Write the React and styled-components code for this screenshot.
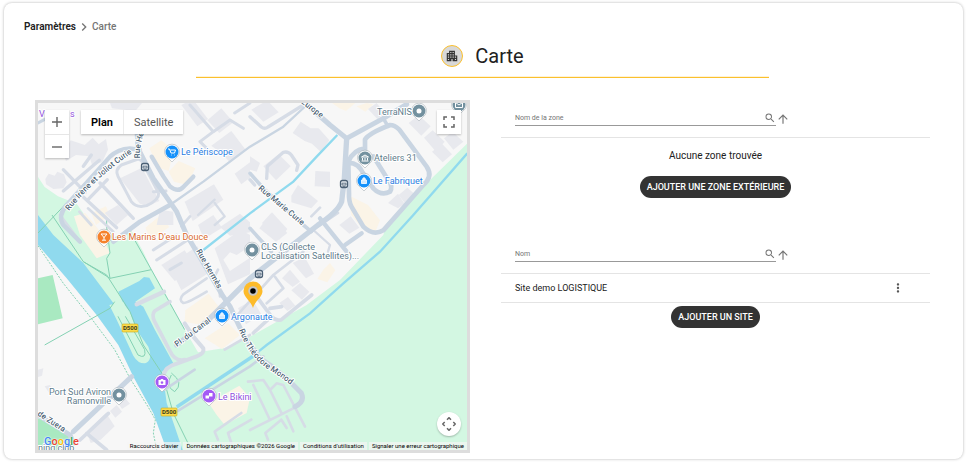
import React from 'react';
import styled, { createGlobalStyle } from 'styled-components';
import {
  MdApartment, MdArrowUpward, MdChevronRight, MdMoreVert, MdSearch,
} from 'react-icons/md';

const GlobalStyle = createGlobalStyle`
  * {
    box-sizing: border-box;
  }
  body {
    margin: 0;
    background: #fff;
    color: #212121;
    font-family: Roboto, "Liberation Sans", sans-serif;
  }
  button, input {
    font-family: inherit;
  }
`;

const Card = styled.main`
  margin: 3px 3px 3px 4px;
  padding: 0 33px 6px 31px;
  border-radius: 8px;
  box-shadow: 0 0 3px rgba(0, 0, 0, .3);
`;

const Breadcrumb = styled.nav`
  display: flex;
  align-items: center;
  margin-left: -11px;
  padding-top: 16px;
  font-size: 10px;
  font-weight: 500;
  line-height: 14px;
  color: #757575;
`;

const Crumb = styled.a`
  color: #212121;
  font-weight: 600;
  text-decoration: none;
`;

const Header = styled.header`
  display: flex;
  align-items: center;
  justify-content: center;
  gap: 12px;
  width: 64%;
  height: 43px;
  margin: 0 auto 22px;
  border-bottom: 1px solid #fbc02d;
  box-shadow: inset 0 -1px #fff3d6;
`;

const Badge = styled.span`
  display: flex;
  align-items: center;
  justify-content: center;
  width: 22px;
  height: 22px;
  border: 1px solid #fbc02d;
  border-radius: 50%;
  background: #d8d8d8;
  color: #333;
`;

const Title = styled.h1`
  margin: 0;
  font-size: 20px;
  font-weight: 400;
`;

const Columns = styled.div`
  display: grid;
  grid-template-columns: 435fr 429fr;
  gap: 31px;
`;

const MapFrame = styled.section`
  position: relative;
  height: 353px;
  border: 3px solid #ddd;
  overflow: hidden;
  background: #f7f7f7;
`;

const MapCanvas = styled.svg`
  display: block;
  width: 100%;
  height: 100%;
`;

const Label = styled.text`
  font-size: ${(props) => (props.$small ? '8px' : '9px')};
  font-weight: ${(props) => (props.$small ? 500 : 400)};
  fill: ${(props) => props.$color || '#5f7d8c'};
  stroke: #fff;
  stroke-width: 2px;
  stroke-linejoin: round;
  paint-order: stroke;
`;

const RoadSign = styled.text`
  font-size: 6px;
  font-weight: 700;
  fill: #3c3a1c;
`;

const Control = styled.div`
  position: absolute;
  display: flex;
  background: #fff;
  box-shadow: 0 1px 2px rgba(0, 0, 0, .25);
`;

const ZoomControl = styled(Control)`
  top: 7px;
  left: 7px;
  flex-direction: column;
`;

const TypeControl = styled(Control)`
  top: 7px;
  left: 43px;
`;

const FullscreenControl = styled(Control)`
  top: 7px;
  right: 6px;
`;

const PanControl = styled(Control)`
  right: 6px;
  bottom: 14px;
  border-radius: 50%;
`;

const IconButton = styled.button`
  display: flex;
  align-items: center;
  justify-content: center;
  width: 24px;
  height: 24px;
  padding: 0;
  border: 0;
  background: none;
  color: #666;

  & + & {
    border-top: 1px solid #e6e6e6;
  }
`;

const TypeButton = styled.button`
  height: 24px;
  padding: 0 10px;
  border: 0;
  background: none;
  font-size: 11px;
  font-weight: ${(props) => (props.$active ? 600 : 400)};
  color: ${(props) => (props.$active ? '#000' : '#565656')};

  & + & {
    border-left: 1px solid #ececec;
  }
`;

const Google = styled.a`
  position: absolute;
  left: 6px;
  bottom: 1px;
  font-size: 11px;
  font-weight: 500;
  line-height: 14px;
  text-decoration: none;
  text-shadow: 0 0 1px #fff, 0 0 2px #fff;
`;

const Letter = styled.span`
  color: ${(props) => props.$color};
`;

const Attribution = styled.div`
  position: absolute;
  right: 0;
  bottom: 0;
  display: flex;
  gap: 2px;
`;

const Legal = styled.a`
  padding: 0 3px;
  background: rgba(245, 245, 245, .7);
  font-size: 6px;
  line-height: 8px;
  color: #000;
  text-decoration: none;
  white-space: nowrap;
`;

const Panel = styled.section`
  display: flex;
  flex-direction: column;
  align-items: center;

  & + & {
    margin-top: 38px;
  }
`;

const SearchBar = styled.div`
  display: flex;
  align-items: flex-end;
  width: 100%;
  height: 38px;
  padding: 0 14px 11px;
  border-bottom: 1px solid #e4e4e4;
`;

const Field = styled.label`
  display: flex;
  align-items: center;
  width: 65%;
  height: 16px;
  border-bottom: 1px solid #999;
  color: #757575;
`;

const Input = styled.input`
  flex: 1;
  min-width: 0;
  padding: 0;
  border: 0;
  outline: 0;
  background: none;
  font-size: 7px;
  color: #333;

  &::placeholder {
    color: #757575;
    opacity: 1;
  }
`;

const SortButton = styled.button`
  display: flex;
  padding: 0;
  border: 0;
  background: none;
  color: #757575;
`;

const Empty = styled.p`
  margin: 11px 0 13px;
  font-size: 10px;
  line-height: 14px;
`;

const AddButton = styled.button`
  height: 22px;
  padding: 0 7px;
  border: 0;
  border-radius: 11px;
  background: #333;
  color: #fff;
  font-size: 9px;
  font-weight: 500;
  text-transform: uppercase;
`;

const SiteTable = styled.table`
  width: 100%;
  margin-bottom: 3px;
  border-collapse: collapse;
`;

const Cell = styled.td`
  height: 28px;
  padding: 0 14px;
  border-bottom: 1px solid #e4e4e4;
  font-size: 9px;
`;

const ActionCell = styled(Cell)`
  width: 62px;
  padding: 0 25px;
`;

const RowButton = styled(SortButton)`
  color: #555;
`;

// Terrain and road shapes are drawn on a grid three times finer than the labels.
const BUILDINGS = [
  'M98 112l42 14 24-22 18 20 22-16 6 32-18 38-30 8-8-26-40-4-30 18-8-24z',
  'M22 228l10-16 18 6 8-12 20 8 8 24-10 18-30 2-22-14z',
  'M246 226l66-32 52 100-36 16-22-8z',
  'M200 330l40-24 30 30-34 30z', 'M366 320l40 6 0 40-50 0z',
  'M440 296l88-52 28 46-92 64z', 'M546 372l60-40 30 26 0 30-60 10z',
  'M216 0l96 0-20 24-70-8z', 'M430 6l34-18 46 60-32 22z',
  'M508 52l42-36 36 42-42 32z', 'M520 128l60-44 44 58-50 34-20-22z',
  'M590 212l46-34 0 46-26 20z', 'M640 20l48-28 34 36-46 28z',
  'M764 90l24-34 30 20 24 0 32 36-26 34-26-24-22-8z',
  'M832 204l44 2 0 46-46-2z', 'M760 278l20-32 60 48-20 22-60-18z',
  'M676 190l46-36 36 36-44 42z', 'M636 160l30 20-10 26-20-6z',
  'M672 360l30-32 46 50-24 32z', 'M664 376l34-44 50 58-34 26z',
  'M1112 60l30-24 36 34-28 28z', 'M1158 104l26-22 36 34-26 30z',
  'M1182 146l30-24 30 32-28 24z', 'M1218 106l26-20 32 30-30 24z',
  'M1050 300l30-28 20 30-20 14z', 'M1082 276l26-22 28 24-34 24z',
  'M904 366l34-26 26 34-30 18z', 'M370 486l70-44 36 58-66 34z',
  'M438 456l40-26 24 50-40 22z', 'M406 512l86-50 26 44-88 56z',
  'M530 436l78-56 28 16 0 34-40 26-20-8-20 22 20 34 60-40 0 50-66 30z',
  'M732 526l24-26 30 36-22 16z', 'M764 480l36-18 28 50-24 14z',
  'M760 562l26-22 28 26-22 24z', 'M724 600l26-18 22 26-24 16z',
  'M600 616l44-26 26 44-46 30z', 'M480 366l46-30 26 38-54 34z',
  'M146 986l58-56 26 40-42 40-30 10z', 'M216 924l20-18 16 20-20 18z',
  'M240 900l22-14 14 16-24 16z', 'M0 800l16-4-4 22-12 4z',
  'M20 850l16-4 10 20-10 8z', 'M990 18l26-18 24 30-22 18z',
];

const SAND = [
  'M334 136l36-24 38 30-16 62-30-10z', 'M392 206l30-32 50 22-24 50-40-10z',
  'M108 340l34-10 40 50 34 70-40 16-50-70z', 'M322 374l46-38 26 36-56 38z',
  'M442 622l70-50 38 50-60 44-50-10z', 'M500 706l70-46 36 36-54 42z',
  'M930 276l60 30 36 46-14 34-36-6-36-44z', 'M882 0l70 0-28 24-20-8z',
  'M956 10l30-10 20 4-24 22z', 'M856 500l20-20 16 22-24 36-30-10z',
  'M512 900l92-52 32 36-10 46-66 36-24-30z', 'M160 330l44-20 10 26-40 30z',
];

const ROADS = [
  ['M296 60L300 136L346 226L416 326L446 396L476 446L556 581L576 610L616 696L666 766L696 786L746 826L790 870Q802 896 771 911', 15],
  ['M306 141L276 136Q240 138 216 161L86 306Q58 340 76 366L126 416', 13],
  ['M226 416L306 356L396 306', 14],
  ['M396 306L496 236L636 131L736 71L806 6', 7],
  ['M341 161L376 220L396 250Q420 270 436 252L466 221', 13],
  ['M801 0L876 66L926 106L1036 46L1106 4', 15],
  ['M926 106L919 226L911 296Q900 326 840 366L636 526L556 606L506 656L416 726', 16],
  ['M636 211L676 256L796 366L820 386', 11],
  ['M846 346L926 446M921 426L971 391', 13],
  ['M981 150L981 110Q990 92 1056 66Q1070 66 1084 80L1166 191Q1186 220 1156 246L1036 382Q1006 400 976 371L940 310Q932 296 933 270L931 176Q946 140 981 136', 14],
  ['M926 180Q960 176 976 212L1006 256Q1030 280 1056 266Q1066 250 1050 230L1006 160', 14],
  ['M1036 46L1050 70M636 376L700 446', 11],
  ['M281 821L106 986M0 936L96 996L106 1020L86 1041', 15],
  ['M380 860L470 800M416 926L636 790L676 760', 8],
  ['M0 60L26 46', 9],
];

const LANES = [
  ['M76 200L142 268M184 172L76 264M136 282L236 374M186 240L286 346M150 290L208 230M160 156L136 190', 10],
  ['M250 186L300 168Q314 170 326 202L362 270Q364 290 326 308Q296 316 280 296L240 220Q230 200 250 186M346 266L384 264', 9],
  ['M456 6L526 86L576 51L616 76M486 116L526 86M486 116L506 136M590 30L636 0', 9],
  ['M636 41L670 72Q680 80 690 72L796 6', 10],
  ['M686 226L688 190L736 148Q750 144 760 156L780 186L776 202M636 230L650 246', 10],
  ['M346 441L416 396M356 471L466 400M396 500L430 480', 9],
  ['M506 526L436 574Q420 590 436 600Q446 602 506 566M540 500L530 520', 8],
  ['M296 604L378 566', 13],
  ['M396 596L350 624Q340 636 350 656L396 744Q410 776 440 770', 11],
  ['M440 661L466 701L496 736Q500 752 476 760L400 788Q376 800 378 820', 12],
  ['M826 381L876 426L870 446', 7],
  ['M586 650L706 516L796 446M711 521L736 556L686 601', 8],
  ['M660 586L700 640Q714 656 730 650L821 576M696 616L731 611M646 690L690 650', 11],
  ['M530 536L544 550L546 580M560 740L636 696', 8],
  ['M630 836L676 831L696 861L716 841L736 846L801 971M636 981L766 916M646 846L696 951M696 861L731 931', 8],
  ['M690 1010L682 990L730 950M730 950L746 975M746 940L766 985', 8],
  ['M540 1010L530 986L610 930M580 1020L570 990L640 950', 8],
  ['M126 1011L211 931M146 991L206 1041', 11],
  ['M66 336L126 416M124 326L160 366M150 316L226 386', 8],
  ['M430 370L456 340M900 330L840 370M820 340L846 314', 8],
  ['M480 336L530 290M530 300L560 340L530 366', 7],
];

const TRAILS = [
  'M42 336L136 476L206 516L276 626L316 726L372 811L406 931L460 1041',
  'M206 346L206 372L216 450L206 466L216 526L340 500L276 386M216 526L136 476',
  'M340 500L440 680M20 726L216 616L230 596M0 390L86 300M400 810Q440 840 410 866Q380 850 400 816',
  'M262 640L320 740Q326 770 300 756L240 640',
];

const LABELS = [
  { x: 143, y: 52, text: 'Le Périscope', color: '#2a7de1' },
  { x: 336, y: 58, text: 'Ateliers 31' },
  { x: 335, y: 81, text: 'Le Fabriquet', color: '#2a7de1' },
  { x: 339, y: 12, text: 'TerraNIS' },
  { x: 74, y: 137, text: 'Les Marins D\'eau Douce', color: '#d9692c' },
  { x: 223, y: 147, text: 'CLS (Collecte' },
  { x: 223, y: 156, text: 'Localisation Satellites)...' },
  { x: 193, y: 217, text: 'Argonaute', color: '#2a7de1' },
  { x: 180, y: 297, text: 'Le Bikini', color: '#9050dd' },
  { x: 73, y: 292, text: 'Port Sud Aviron', anchor: 'end' },
  { x: 73, y: 301, text: 'Ramonville', anchor: 'end' },
  { x: 1, y: 14, text: 'V', color: '#9050dd' },
  { x: 32, y: 14, text: 's', color: '#9050dd' },
  { x: 0, y: 348, text: 'ning club' },
];

const STREETS = [
  { id: 'irene', d: 'M31 108Q56 76 94 50', text: 'Rue Irène et Joliot Curie' },
  { id: 'hermes-north', d: 'M102 55Q101 42 108 24', text: 'Rue He' },
  { id: 'hermes', d: 'M158 148L190 204', text: 'Rue Hermès' },
  { id: 'curie', d: 'M220 86L280 136', text: 'Rue Marie Curie' },
  { id: 'europe', d: 'M263 0L302 30', text: 'Europe' },
  { id: 'canal', d: 'M139 244L190 206', text: 'Pl. du Canal' },
  { id: 'monod', d: 'M201 227Q212 256 233 268Q252 280 270 296', text: 'Rue Théodore Monod' },
  { id: 'zuera', d: 'M-1 312L36 336', text: 'de Zuera' },
];

const BLUE = '#1591fa';
const GREY = '#73919f';
const PURPLE = '#a45bf5';

const PINS = [
  { x: 134, y: 49, color: BLUE, glyph: 'cart' },
  { x: 327, y: 55, color: GREY, glyph: 'museum' },
  { x: 326, y: 78, color: BLUE, glyph: 'bag' },
  { x: 381, y: 8, color: GREY, glyph: 'dot' },
  { x: 421, y: 2, color: GREY, glyph: 'mail' },
  { x: 66, y: 134, color: '#f5822c', glyph: 'glass' },
  { x: 214, y: 147, color: GREY, glyph: 'dot' },
  { x: 184, y: 213, color: BLUE, glyph: 'bag' },
  { x: 171, y: 293, color: PURPLE, glyph: 'masks' },
  { x: 124, y: 279, color: PURPLE, glyph: 'camera' },
  { x: 81, y: 292, color: GREY, glyph: 'dot' },
];

const GLYPHS = {
  cart: <path d="M-4-3h1.5L-1 1h3.5l1-3h-5M-1 3h.6M2 3h.6" fill="none" stroke="#fff" />,
  museum: <path d="M-3.5-1L0-3l3.500 2zM-2.500 0v2.500M0 0v2.500M2.500 0v2.500M-3.500 3h7" fill="none" stroke="#fff" />,
  bag: <path d="M-2.500-1h5v3.500h-5zM-1.300-1v-1a1.300 1.300 0 0 1 2.600 0V-1" fill="#fff" stroke="#fff" fillOpacity=".8" strokeWidth=".8" />,
  dot: <circle r="2.500" fill="#fff" />,
  mail: <path d="M-3.500-2.500h7v5h-7zL0 0l3.500-2.500" fill="none" stroke="#fff" />,
  glass: <path d="M-3-3h6L0 .5zM0 0v3M-2 3.200h4" fill="none" stroke="#fff" />,
  masks: <path d="M-3.500-.5h3.500v3h-3.500zM0-3h3.500v3.500H0z" fill="#fff" />,
  camera: <path fillRule="evenodd" d="M-3.500-2h2l.5-1h2l.5 1h2v5h-7zM0-.8a1.300 1.300 0 1 0 .01 0z" fill="#fff" />,
};

const STOPS = [[107, 64], [306, 81], [221, 171]];
const SIGNS = [[92, 225], [131, 309]];

const GOOGLE = [
  ['G', '#4285f4'], ['o', '#ea4335'], ['o', '#fbbc05'],
  ['g', '#4285f4'], ['l', '#34a853'], ['e', '#ea4335'],
];

const Terrain = () => (
  <g transform="scale(.33333)">
    <path fill="#d3f7e2" d="M0 222L20 252L60 280L116 302L140 336L200 420L276 376L316 446L341 501L376 561L441 681L480 748L560 735L636 701L716 656L806 606L906 531L1036 396L1046 361L1186 221L1288 121V1041H420L340 760L0 350z" />
    <path fill="#a9e9c1" d="M0 526L44 516L74 646L0 664zM0 946L76 981L106 1020L96 1041H0z" />
    <path fill="#90daee" d="M0 336L46 396L136 480L226 600L286 720L300 700L276 626L256 602L241 566L304 534L318 522L334 524L351 556L292 596L316 611L351 681L406 781L372 806L382 870L386 900L434 1041H386L346 931L286 821L241 726L176 636L86 526L0 426z" />
    <path fill="#d3f7e2" d="M214 606L256 596L296 681L331 731Q346 772 321 781Q300 782 286 758L236 650z" />
    {SAND.map((d) => <path key={d} d={d} fill="#fbf4e7" />)}
    {BUILDINGS.map((d) => <path key={d} d={d} fill="#e8e9ee" />)}
    <g fill="none" stroke="#84d1b3" strokeWidth="3">
      {TRAILS.map((d) => <path key={d} d={d} />)}
      <path strokeDasharray="6 4" d="M0 428L76 541L160 646L230 740L276 826L330 911L352 950L346 990L356 1041" />
    </g>
    <g fill="none" stroke="#90daee" strokeWidth="7">
      <path d="M1288 151L1126 336L1026 446L916 541L816 631L686 726L636 766" />
      <path strokeWidth="10" d="M646 759L416 912" />
      <path d="M898 96L836 161L766 236L636 331L496 441" />
    </g>
    <g fill="none" strokeLinecap="round" strokeLinejoin="round">
      {LANES.map(([d, width]) => <path key={d} d={d} stroke="#d6dce6" strokeWidth={width} />)}
      {ROADS.map(([d, width]) => <path key={d} d={d} stroke="#c9d5e2" strokeWidth={width} />)}
    </g>
  </g>
);

const Pin = ({ x, y, color, glyph }) => (
  <g transform={`translate(${x} ${y})`}>
    <path d="M0 10L-4 6A7.500 7.500 0 1 1 4 6z" fill="#fff" stroke="#9aa5ab" strokeWidth=".5" />
    <circle r="6.500" fill={color} />
    {GLYPHS[glyph]}
  </g>
);

const SiteMap = () => (
  <MapFrame aria-label="Carte des sites">
    <MapCanvas viewBox="0 0 429 347" preserveAspectRatio="xMidYMid slice">
      <Terrain />
      {STREETS.map(({ id, d, text }) => (
        <React.Fragment key={id}>
          <path id={id} d={d} fill="none" />
          <Label $small $color="#4b5f73">
            <textPath href={`#${id}`}>{text}</textPath>
          </Label>
        </React.Fragment>
      ))}
      {STOPS.map(([x, y]) => (
        <g key={x} transform={`translate(${x} ${y})`}>
          <rect x="-3.500" y="-3.500" width="7" height="7" rx="2" fill="#e8edf2" stroke="#4b6075" strokeWidth="1.300" />
          <path d="M-2-.8h4v1.800h-4zM-1.500 2.400h3" fill="none" stroke="#4b6075" strokeWidth=".8" />
        </g>
      ))}
      {SIGNS.map(([x, y]) => (
        <g key={x} transform={`translate(${x} ${y})`}>
          <rect x="-8" y="-4" width="16" height="8" rx="1" fill="#fbdc4b" stroke="#c9a91c" strokeWidth=".6" />
          <RoadSign y="2" textAnchor="middle">D500</RoadSign>
        </g>
      ))}
      {PINS.map((pin) => <Pin key={`${pin.x}-${pin.y}`} {...pin} />)}
      {LABELS.map(({ x, y, text, color, anchor }) => (
        <Label key={text} x={x} y={y} $color={color} textAnchor={anchor}>{text}</Label>
      ))}
      <g transform="translate(215 188)">
        <path d="M0 17C-2 10-9.500 6-9.500 0a9.500 9.500 0 0 1 19 0C9.500 6 2 10 0 17z" fill="#fdbb2a" />
        <circle r="4.800" fill="#c5c5c5" />
        <circle r="2.800" fill="#000" />
      </g>
    </MapCanvas>
    <ZoomControl>
      <IconButton type="button" aria-label="Zoom avant">
        <svg width="12" height="12" viewBox="0 0 12 12"><path d="M6 1v10M1 6h10" stroke="currentColor" strokeWidth="1.400" /></svg>
      </IconButton>
      <IconButton type="button" aria-label="Zoom arrière">
        <svg width="12" height="12" viewBox="0 0 12 12"><path d="M1 6h10" stroke="currentColor" strokeWidth="1.400" /></svg>
      </IconButton>
    </ZoomControl>
    <TypeControl>
      <TypeButton type="button" $active>Plan</TypeButton>
      <TypeButton type="button">Satellite</TypeButton>
    </TypeControl>
    <FullscreenControl>
      <IconButton type="button" aria-label="Plein écran">
        <svg width="12" height="12" viewBox="0 0 12 12">
          <path d="M1 4V1h3M8 1h3v3M11 8v3H8M4 11H1V8" fill="none" stroke="currentColor" strokeWidth="1.500" />
        </svg>
      </IconButton>
    </FullscreenControl>
    <PanControl>
      <IconButton type="button" aria-label="Déplacer la carte">
        <svg width="14" height="14" viewBox="0 0 14 14">
          <path d="M5 2.700l2-2 2 2M5 11.300l2 2 2-2M2.700 5l-2 2 2 2M11.300 5l2 2-2 2" fill="none" stroke="currentColor" strokeWidth="1.500" />
        </svg>
      </IconButton>
    </PanControl>
    <Google href="#google" aria-label="Google">
      {/* eslint-disable-next-line react/no-array-index-key */}
      {GOOGLE.map(([letter, color], i) => <Letter key={i} $color={color}>{letter}</Letter>)}
    </Google>
    <Attribution>
      <Legal href="#raccourcis">Raccourcis clavier</Legal>
      <Legal href="#donnees">Données cartographiques ©2026 Google</Legal>
      <Legal href="#conditions">Conditions d&apos;utilisation</Legal>
      <Legal href="#erreur">Signaler une erreur cartographique</Legal>
    </Attribution>
  </MapFrame>
);

const Search = ({ label }) => (
  <SearchBar>
    <Field>
      <Input type="text" placeholder={label} aria-label={label} />
      <MdSearch size={12} />
    </Field>
    <SortButton type="button" aria-label="Trier">
      <MdArrowUpward size={14} />
    </SortButton>
  </SearchBar>
);

const App = () => (
  <>
    <GlobalStyle />
    <Card>
      <Breadcrumb aria-label="Fil d'Ariane">
        <Crumb href="#parametres">Paramètres</Crumb>
        <MdChevronRight size={16} />
        <span>Carte</span>
      </Breadcrumb>
      <Header>
        <Badge><MdApartment size={14} /></Badge>
        <Title>Carte</Title>
      </Header>
      <Columns>
        <SiteMap />
        <div>
          <Panel>
            <Search label="Nom de la zone" />
            <Empty>Aucune zone trouvée</Empty>
            <AddButton type="button">Ajouter une zone extérieure</AddButton>
          </Panel>
          <Panel>
            <Search label="Nom" />
            <SiteTable>
              <tbody>
                <tr>
                  <Cell>Site demo LOGISTIQUE</Cell>
                  <ActionCell>
                    <RowButton type="button" aria-label="Actions du site">
                      <MdMoreVert size={14} />
                    </RowButton>
                  </ActionCell>
                </tr>
              </tbody>
            </SiteTable>
            <AddButton type="button">Ajouter un site</AddButton>
          </Panel>
        </div>
      </Columns>
    </Card>
  </>
);

export default App;
